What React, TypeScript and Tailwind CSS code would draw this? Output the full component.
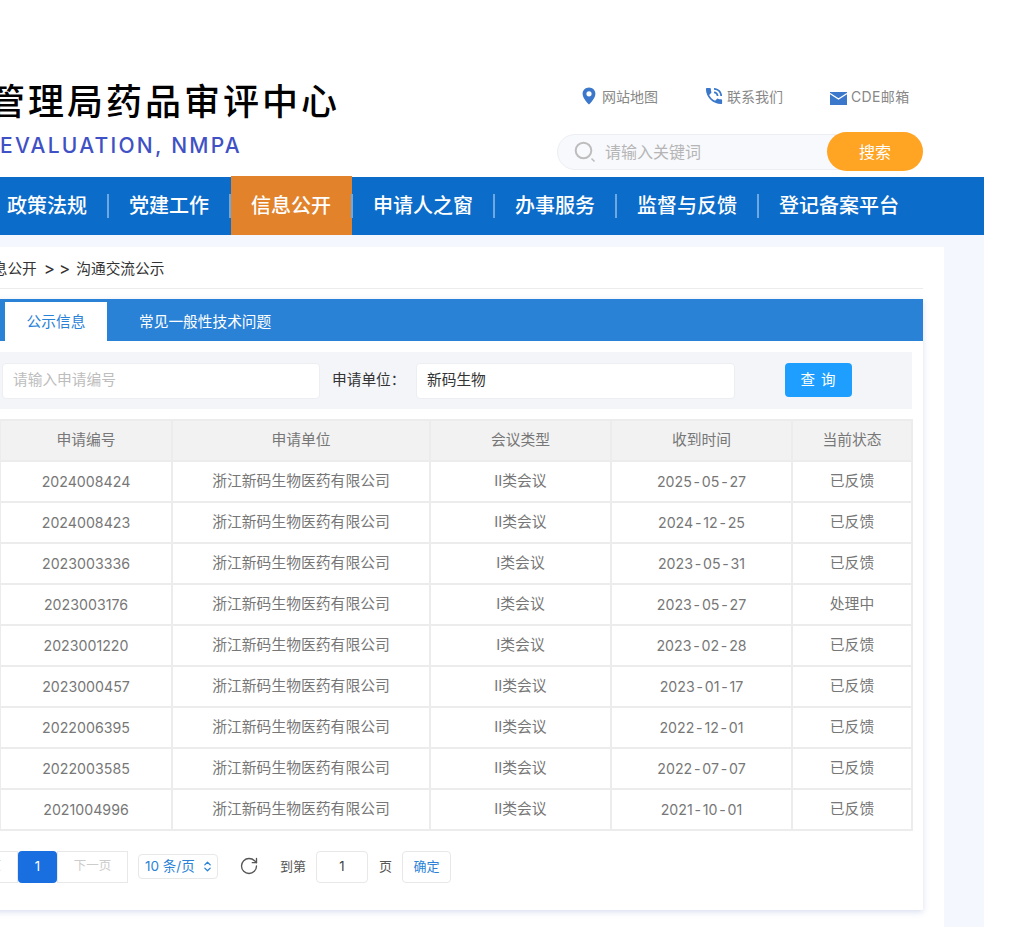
import { ChevronsUpDown, RotateCw } from "lucide-react";

const FONT = "font-['Inter','Noto_Sans_CJK_SC',sans-serif]";

const navItems = ["政策法规", "党建工作", "信息公开", "申请人之窗", "办事服务", "监督与反馈", "登记备案平台"];

const rows = [
  ["2024008424", "II类会议", "2025-05-27", "已反馈"],
  ["2024008423", "II类会议", "2024-12-25", "已反馈"],
  ["2023003336", "I类会议", "2023-05-31", "已反馈"],
  ["2023003176", "I类会议", "2023-05-27", "处理中"],
  ["2023001220", "I类会议", "2023-02-28", "已反馈"],
  ["2023000457", "II类会议", "2023-01-17", "已反馈"],
  ["2022006395", "II类会议", "2022-12-01", "已反馈"],
  ["2022003585", "II类会议", "2022-07-07", "已反馈"],
  ["2021004996", "II类会议", "2021-10-01", "已反馈"],
];

function PinIcon() {
  return (
    <svg width="14" height="18" viewBox="0 0 14 18" className="shrink-0">
      <path d="M7 0.5C3.4 0.5.6 3.3.6 6.8c0 4.3 4.6 8.9 6.4 10.7 1.8-1.8 6.4-6.4 6.4-10.7C13.4 3.3 10.6.5 7 .5z" fill="#3b78cc" />
      <circle cx="7" cy="6.8" r="2.6" fill="#fff" />
    </svg>
  );
}

function PhoneIcon() {
  return (
    <svg width="18" height="18" viewBox="2 2 20 20" className="shrink-0">
      <path
        fill="#3b78cc"
        d="M20 15.5c-1.25 0-2.45-.2-3.57-.57-.35-.11-.74-.03-1.02.24l-2.2 2.2c-2.83-1.44-5.15-3.75-6.59-6.59l2.2-2.21c.28-.26.36-.65.25-1C8.7 6.45 8.5 5.25 8.5 4c0-.55-.45-1-1-1H4c-.55 0-1 .45-1 1 0 9.39 7.61 17 17 17 .55 0 1-.45 1-1v-3.5c0-.55-.45-1-1-1zM19 12h2c0-4.97-4.03-9-9-9v2c3.87 0 7 3.13 7 7zm-4 0h2c0-2.76-2.24-5-5-5v2c1.66 0 3 1.34 3 3z"
      />
    </svg>
  );
}

function MailIcon() {
  return (
    <svg width="17" height="13" viewBox="0 0 17 13" className="mt-1 shrink-0">
      <rect width="17" height="13" fill="#3b78cc" />
      <path d="M0 1.5l8.5 5.5L17 1.5" fill="none" stroke="#fff" strokeWidth="1.3" />
    </svg>
  );
}

function SearchIcon() {
  return (
    <svg width="22" height="22" viewBox="0 0 22 22" className="shrink-0">
      <circle cx="9.5" cy="9.5" r="7.8" fill="none" stroke="#bdbdbd" strokeWidth="2" />
      <path d="M17.5 17.5l3 3" stroke="#bdbdbd" strokeWidth="1.6" />
    </svg>
  );
}

function Header() {
  return (
    <div className="flex h-[177px] justify-between pl-[29px] pr-[61px]">
      <div className="pt-[79px]">
        <div className="text-[36px] leading-[46px] font-medium tracking-[3px] text-black">管理局药品审评中心</div>
        <div className="mt-[8px] ml-[11px] text-[21px] leading-[26px] font-medium tracking-[2.25px] text-[#3f51c4]">EVALUATION, NMPA</div>
      </div>
      <div className="flex w-[366px] flex-col pt-[86px]">
        <div className="flex h-[20px] items-center pl-[25px] text-[14px] text-[#888]">
          <div className="flex w-[123px] items-center gap-[6px]">
            <PinIcon />
            <span>网站地图</span>
          </div>
          <div className="flex w-[125px] items-center gap-[4px]">
            <PhoneIcon />
            <span>联系我们</span>
          </div>
          <div className="flex items-center gap-[4px]">
            <MailIcon />
            <span className="tracking-[0.35px]">CDE邮箱</span>
          </div>
        </div>
        <div className="relative mt-[28px] flex h-[36px] w-[300px] items-center gap-[9px] rounded-full border border-[#eceef2] bg-[#f8f9fc] pl-[16px] text-[16px] text-[#b5b5b5]">
          <SearchIcon />
          <span>请输入关键词</span>
          <button className="absolute top-[-3px] left-[269px] h-[39px] w-[96px] rounded-full bg-[#ffa423] text-[16px] text-white">搜索</button>
        </div>
      </div>
    </div>
  );
}

function Nav() {
  return (
    <div className="flex h-[58px] items-center bg-[#0c6cc9] pl-[27px] text-[20px] font-medium text-white">
      {navItems.map((item, i) => (
        <div key={item} className="flex h-full items-center">
          {item === "信息公开" ? (
            <div className="-mr-px -mt-px flex h-[59px] items-center bg-[#e2832c] pl-[20px] pr-[21px]">{item}</div>
          ) : (
            <div className={i === 0 ? "pl-[21px] pr-[20px] -ml-px" : "px-[20px]"}>{item}</div>
          )}
          {i < navItems.length - 1 && <div className="relative h-[24px] w-[2px] bg-[#6ea8e0]" />}
        </div>
      ))}
    </div>
  );
}

function SearchRow() {
  return (
    <div className="flex h-[57px] items-center bg-[#f4f5f9] pl-[12px] text-[14.7px]">
      <div className="flex h-[36px] w-[318px] items-center rounded border border-[#eceef2] bg-white pl-[10px] text-[#bdbdbd]">请输入申请编号</div>
      <div className="ml-[12px] w-[84px] text-[#333]">申请单位：</div>
      <div className="flex h-[36px] w-[319px] items-center rounded border border-[#eceef2] bg-white pl-[10px] text-[#333]">新码生物</div>
      <button className="ml-[50px] -mt-[2px] h-[34px] w-[67px] rounded-sm bg-[#1e9fff] text-[14.5px] tracking-[1px] text-white">查 询</button>
    </div>
  );
}

// 日期里的短横线在参考图中更宽
function DateText({ value }: { value: string }) {
  const [y, m, d] = value.split("-");
  return (
    <>
      {y}
      <span className="mx-[1.75px]">-</span>
      {m}
      <span className="mx-[1.75px]">-</span>
      {d}
    </>
  );
}

function DataTable() {
  const cell = "border-2 border-[#ececec] p-0 text-center font-normal";
  return (
    <table className="ml-[9px] mt-[10px] w-[912px] table-fixed border-collapse text-[14.8px] text-[#777]">
      <colgroup>
        <col className="w-[172px]" />
        <col className="w-[258px]" />
        <col className="w-[181px]" />
        <col className="w-[181px]" />
        <col className="w-[120px]" />
      </colgroup>
      <thead>
        <tr className="h-[41px] bg-[#f2f2f2]">
          <th className={cell}>申请编号</th>
          <th className={cell}>申请单位</th>
          <th className={cell}>会议类型</th>
          <th className={cell}>收到时间</th>
          <th className={cell}>当前状态</th>
        </tr>
      </thead>
      <tbody>
        {rows.map((r) => (
          <tr key={r[0]} className="h-[41px]">
            <td className={`${cell} text-[14.2px]`}>{r[0]}</td>
            <td className={cell}>浙江新码生物医药有限公司</td>
            <td className={cell}>{r[1]}</td>
            <td className={`${cell} text-[14.2px]`}>
              <DateText value={r[2]} />
            </td>
            <td className={cell}>{r[3]}</td>
          </tr>
        ))}
      </tbody>
    </table>
  );
}

function Pagination() {
  return (
    <div className="mt-[20px] -ml-[43px] flex h-[32px] items-center text-[13px]">
      <div className="flex h-[32px] w-[71px] items-center justify-center border border-[#e8e8e8] pb-[2px] text-[12.5px] text-[#ccc]">上一页</div>
      <div className="flex h-[32px] w-[39px] items-center justify-center rounded-sm bg-[#1a6fe0] text-white">1</div>
      <div className="flex h-[32px] w-[71px] items-center justify-center border border-[#e8e8e8] pb-[2px] text-[12.5px] text-[#ccc]">下一页</div>
      <div className="ml-[10px] flex h-[25px] w-[80px] -translate-y-[1px] items-center justify-between rounded-sm border border-[#e8e8e8] pl-[6px] pr-[3px] text-[13.5px] text-[#2a82d7]">
        <span>10 条/页</span>
        <ChevronsUpDown size={13} strokeWidth={2.4} />
      </div>
      <RotateCw size={20} strokeWidth={1.6} className="ml-[21px] -translate-y-[1px] text-[#555]" />
      <span className="ml-[21px] text-[#555]">到第</span>
      <div className="ml-[10px] flex h-[32px] w-[52px] items-center justify-center rounded-sm border border-[#e8e8e8] text-[#444]">1</div>
      <span className="ml-[11px] text-[#555]">页</span>
      <div className="ml-[10px] flex h-[32px] w-[49px] items-center justify-center rounded-sm border border-[#e8e8e8] text-[#2a82d7]">确定</div>
    </div>
  );
}

export default function App() {
  return (
    <div className={`h-[927px] w-[1024px] overflow-hidden bg-white ${FONT}`}>
      <div className="-ml-[40px] flex w-[1024px] flex-col">
        <Header />
        <Nav />
        <div className="h-[692px] bg-[#f4f8fe] pt-[12px]">
          <div className="h-[680px] w-[984px] bg-white pr-[21px]">
            <div className="flex h-[42px] items-end border-b border-[#ececec] pb-[8px] pl-[18px] text-[14.7px] text-[#333]">
              信息公开
              <span className="ml-[7px] mr-[2px] text-[17px] leading-[22px] tracking-[4px]">&gt;&gt;</span>
              沟通交流公示
            </div>
            <div className="mt-[10px] h-[611px] bg-white pr-[11px] shadow-[0_2px_6px_rgba(130,150,200,0.3)]">
              <div className="-mr-[11px] flex h-[42px] items-end bg-[#2a82d7] pl-[45px] text-[14.7px]">
                <div className="flex h-[39px] w-[102px] items-center justify-center bg-white pt-[2px] text-[#2a82d7]">公示信息</div>
                <div className="flex h-[39px] items-center pl-[32px] pt-[2px] text-white">常见一般性技术问题</div>
              </div>
              <div className="mt-[11px] ml-[30px]">
                <SearchRow />
                <DataTable />
                <Pagination />
              </div>
            </div>
          </div>
        </div>
      </div>
    </div>
  );
}
